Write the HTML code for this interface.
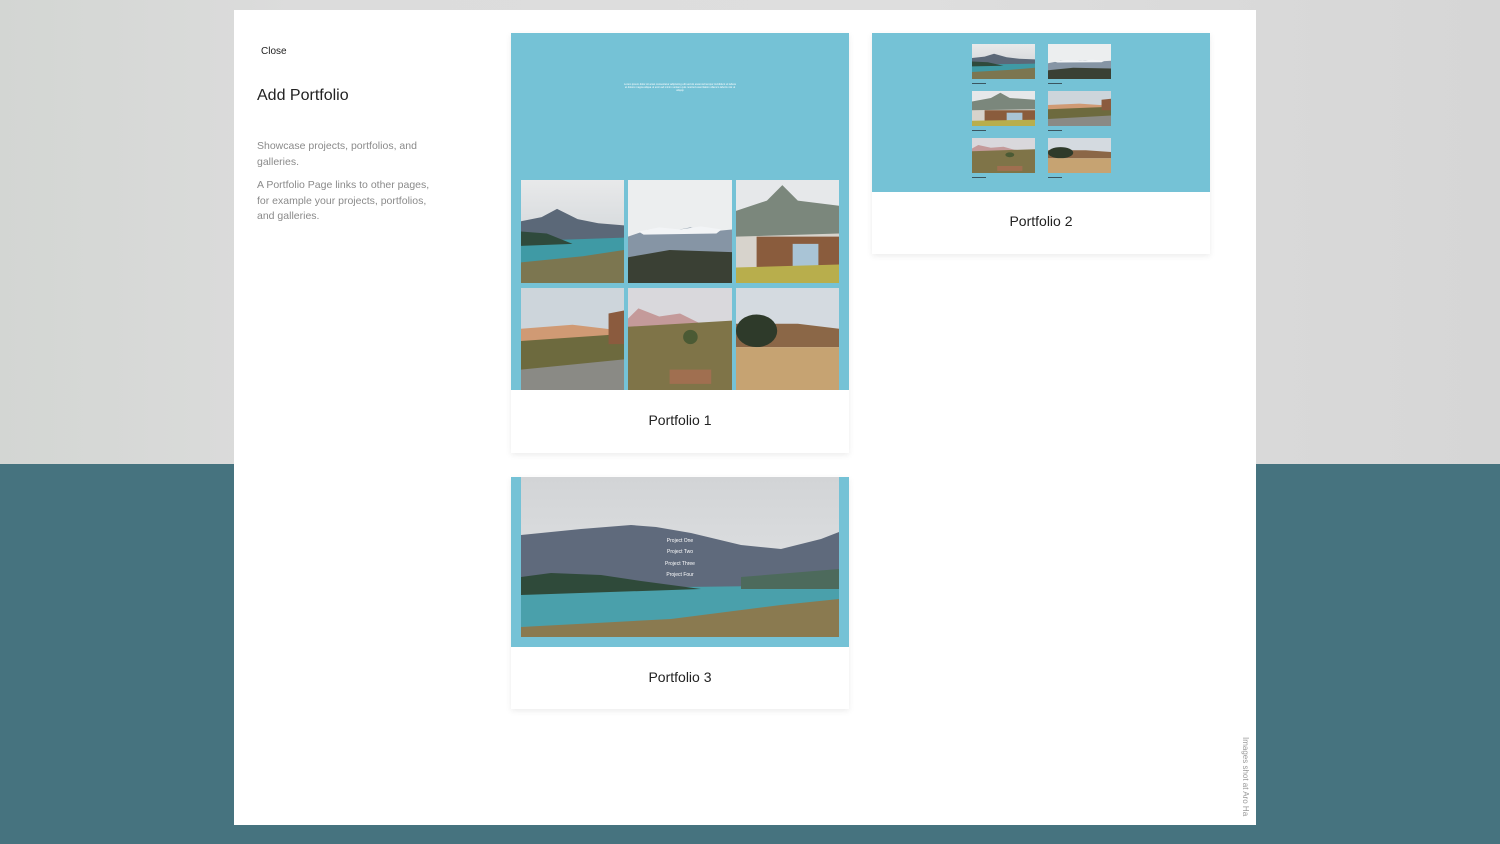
<!DOCTYPE html>
<html><head><meta charset="utf-8">
<style>
*{margin:0;padding:0;box-sizing:border-box}
body{width:1500px;height:844px;overflow:hidden;position:relative;font-family:"Liberation Sans",sans-serif;background:#46737f}
.top{position:absolute;left:0;top:0;width:1500px;height:464px;background:linear-gradient(90deg,#d3d6d3 0%,#dcdcdc 20%,#dedede 60%,#d6d6d6 100%)}
.modal{position:absolute;left:234px;top:10px;width:1022px;height:815px;background:#fff}
.t{position:absolute;color:#222}
.card{position:absolute;background:#fff;box-shadow:0 2px 6px rgba(0,0,0,.08)}
.blue{position:absolute;left:0;top:0;width:100%;background:#75c2d6}
.lbl{position:absolute;width:100%;text-align:center;font-size:14px;color:#222}
svg.im{position:absolute;display:block}
.cap{position:absolute;width:20px;height:1px;background:#3a5560}
</style></head><body>
<svg width="0" height="0" style="position:absolute">
<defs>
<linearGradient id="sk" x1="0" y1="0" x2="0" y2="1"><stop offset="0" stop-color="#e8e9ea"/><stop offset="1" stop-color="#c6ccd0"/></linearGradient>
<symbol id="s1" viewBox="0 0 100 100" preserveAspectRatio="none"><rect width="100" height="100" fill="url(#sk)"/><polygon points="0,40 20,36 35,28 55,38 75,42 100,44 100,70 0,70" fill="#5b6878"/><polygon points="0,52 40,58 100,56 100,82 0,82" fill="#3f9aa5"/><polygon points="0,50 25,52 50,62 0,64" fill="#2f4a3c"/><polygon points="0,80 60,74 100,68 100,100 0,100" fill="#7c7650"/></symbol>
<symbol id="s2" viewBox="0 0 100 100" preserveAspectRatio="none"><rect width="100" height="100" fill="#eceeef"/><polygon points="0,55 20,48 40,50 60,46 80,50 100,48 100,75 0,75" fill="#8695a5"/><polygon points="10,50 30,46 50,48 70,45 90,48 85,52 15,53" fill="#f2f4f6"/><polygon points="0,75 40,68 100,70 100,100 0,100" fill="#3a4034"/></symbol>
<symbol id="s3" viewBox="0 0 100 100" preserveAspectRatio="none"><rect width="100" height="100" fill="#e6e8ea"/><polygon points="0,30 30,20 45,5 60,20 100,25 100,80 0,80" fill="#7b877c"/><polygon points="0,55 100,52 100,88 0,88" fill="#d7d3cc"/><polygon points="20,55 100,55 100,88 20,88" fill="#8a5c3d"/><rect x="55" y="62" width="25" height="26" fill="#a9c4d6"/><polygon points="0,85 100,82 100,100 0,100" fill="#b8ae4c"/></symbol>
<symbol id="s4" viewBox="0 0 100 100" preserveAspectRatio="none"><rect width="100" height="100" fill="#cdd5db"/><polygon points="0,40 50,36 100,42 100,55 0,55" fill="#d09a74"/><polygon points="0,52 100,45 100,100 0,100" fill="#6d6a3e"/><polygon points="85,25 100,22 100,55 85,55" fill="#8b5b3e"/><polygon points="0,80 100,70 100,100 0,100" fill="#8a8a85"/></symbol>
<symbol id="s5" viewBox="0 0 100 100" preserveAspectRatio="none"><rect width="100" height="100" fill="#d9d8dc"/><polygon points="0,30 10,20 30,28 50,25 70,35 0,40" fill="#c49a9a"/><polygon points="0,38 100,32 100,100 0,100" fill="#7f7448"/><rect x="40" y="80" width="40" height="14" fill="#a06f50"/><circle cx="60" cy="48" r="7" fill="#4b5a34"/></symbol>
<symbol id="s6" viewBox="0 0 100 100" preserveAspectRatio="none"><rect width="100" height="100" fill="#d4dae0"/><polygon points="0,35 60,35 100,40 100,58 0,58" fill="#8b6747"/><ellipse cx="20" cy="42" rx="20" ry="16" fill="#2e3a2a"/><polygon points="0,58 100,58 100,100 0,100" fill="#c6a372"/></symbol>
</defs></svg>
<div class="top"></div>
<div class="modal">
 <div class="t" style="left:27px;top:36px;font-size:10px">Close</div>
 <div class="t" style="left:23px;top:77px;font-size:16px">Add Portfolio</div>
 <div class="t" style="left:23px;top:129px;width:190px;font-size:10.5px;line-height:15.5px;color:#8a8a8a">Showcase projects, portfolios, and galleries.</div>
 <div class="t" style="left:23px;top:168px;width:185px;font-size:10.5px;line-height:15.5px;color:#8a8a8a">A Portfolio Page links to other pages, for example your projects, portfolios, and galleries.</div>
 <div class="t" style="top:727px;left:1016px;font-size:8px;color:#999;transform:rotate(90deg);transform-origin:0 0;white-space:nowrap">Images shot at Aro Ha</div>
</div>

<div class="card" style="left:511px;top:33px;width:338px;height:420px">
 <div class="blue" style="height:357px"></div>
 <div style="position:absolute;left:112px;top:50px;width:114px;font-size:2.6px;line-height:3px;color:#fff;text-align:center">Lorem ipsum dolor sit amet consectetur adipiscing elit sed do eiusmod tempor incididunt ut labore et dolore magna aliqua ut enim ad minim veniam quis nostrud exercitation ullamco laboris nisi ut aliquip</div>
 <svg class="im" style="left:10px;top:147px" width="103" height="103"><use href="#s1"/></svg>
 <svg class="im" style="left:117px;top:147px" width="104" height="103"><use href="#s2"/></svg>
 <svg class="im" style="left:225px;top:147px" width="103" height="103"><use href="#s3"/></svg>
 <svg class="im" style="left:10px;top:255px" width="103" height="102"><use href="#s4"/></svg>
 <svg class="im" style="left:117px;top:255px" width="104" height="102"><use href="#s5"/></svg>
 <svg class="im" style="left:225px;top:255px" width="103" height="102"><use href="#s6"/></svg>
 <div class="lbl" style="top:379px">Portfolio 1</div>
</div>

<div class="card" style="left:872px;top:33px;width:338px;height:221px">
 <div class="blue" style="height:159px"></div>
 <svg class="im" style="left:100px;top:11px" width="63" height="35"><use href="#s1"/></svg>
 <svg class="im" style="left:176px;top:11px" width="63" height="35"><use href="#s2"/></svg>
 <svg class="im" style="left:100px;top:58px" width="63" height="35"><use href="#s3"/></svg>
 <svg class="im" style="left:176px;top:58px" width="63" height="35"><use href="#s4"/></svg>
 <svg class="im" style="left:100px;top:105px" width="63" height="35"><use href="#s5"/></svg>
 <svg class="im" style="left:176px;top:105px" width="63" height="35"><use href="#s6"/></svg>
 <div class="cap" style="left:100px;top:50px;width:14px"></div><div class="cap" style="left:176px;top:50px;width:14px"></div>
 <div class="cap" style="left:100px;top:97px;width:14px"></div><div class="cap" style="left:176px;top:97px;width:14px"></div>
 <div class="cap" style="left:100px;top:144px;width:14px"></div><div class="cap" style="left:176px;top:144px;width:14px"></div>
 <div class="lbl" style="top:180px">Portfolio 2</div>
</div>

<div class="card" style="left:511px;top:477px;width:338px;height:232px">
 <div class="blue" style="height:170px"></div>
 <svg class="im" style="left:10px;top:0" width="318" height="160" viewBox="0 0 318 160" preserveAspectRatio="none">
  <defs><linearGradient id="sk3" x1="0" y1="0" x2="0" y2="1"><stop offset="0" stop-color="#d2d4d6"/><stop offset="1" stop-color="#e4e6e8"/></linearGradient></defs>
  <rect width="318" height="160" fill="url(#sk3)"/>
  <polygon points="0,58 60,52 110,48 135,50 170,56 220,68 260,72 300,62 318,55 318,112 0,112" fill="#5f6a7c"/>
  <polygon points="0,112 318,108 318,148 0,150" fill="#4aa0ab"/>
  <polygon points="0,100 30,96 80,98 120,104 180,112 0,118" fill="#2f4a3a"/>
  <polygon points="220,100 318,92 318,112 220,112" fill="#4d6a5c"/>
  <polygon points="0,150 150,142 260,128 318,122 318,160 0,160" fill="#8a7a50"/>
  <g fill="#fff" font-size="5" font-family="Liberation Sans,sans-serif" text-anchor="middle"><text x="159" y="65">Project One</text><text x="159" y="76">Project Two</text><text x="159" y="88">Project Three</text><text x="159" y="99">Project Four</text></g>
 </svg>
 <div class="lbl" style="top:192px">Portfolio 3</div>
</div>
</body></html>
